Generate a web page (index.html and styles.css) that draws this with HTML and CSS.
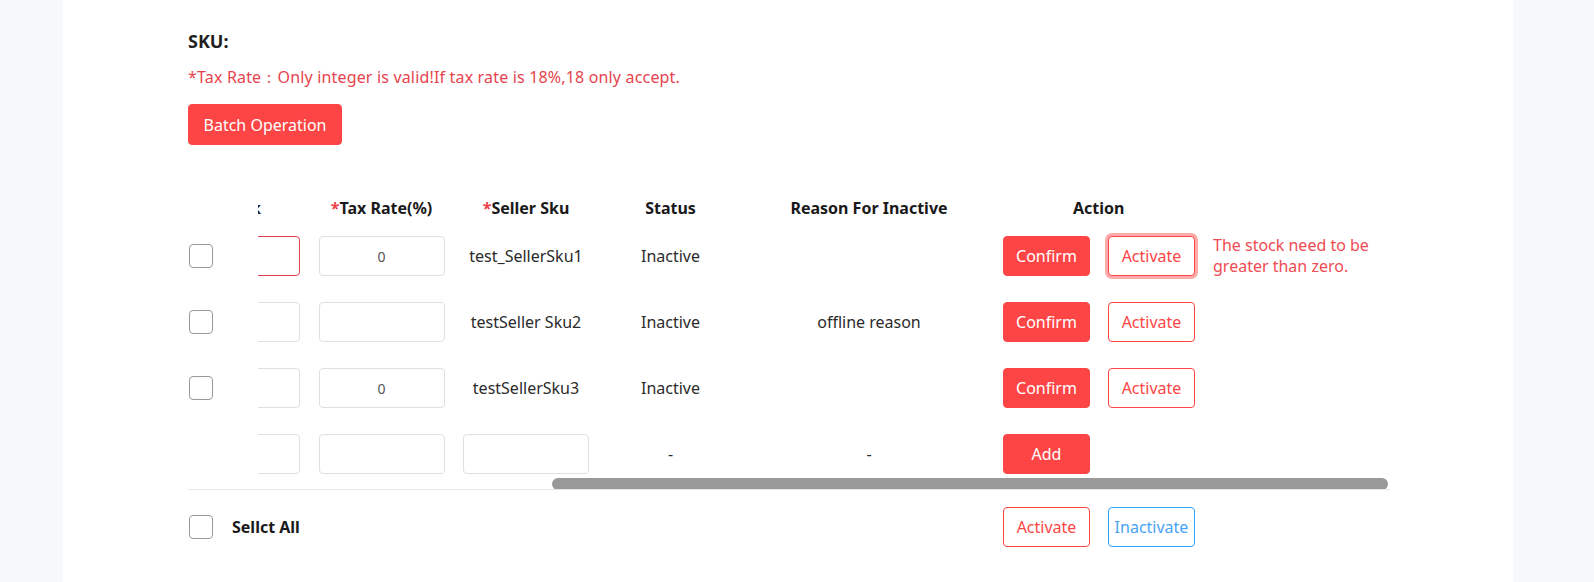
FILE: index.html
```html
<!DOCTYPE html>
<html lang="en">
<head>
<meta charset="utf-8">
<title>SKU</title>
<link rel="stylesheet" href="styles.css">
</head>
<body>
<div class="page">
  <section class="card">
    <h2 class="title">SKU:</h2>
    <p class="note">*Tax Rate：Only integer is valid!If tax rate is 18%,18 only accept.</p>
    <button class="btn btn-solid btn-batch">Batch Operation</button>

    <div class="table">
      <div class="fixed-col">
        <div class="head-cell"></div>
        <div class="check-cell"><span class="checkbox"></span></div>
        <div class="check-cell"><span class="checkbox"></span></div>
        <div class="check-cell"><span class="checkbox"></span></div>
        <div class="check-cell"></div>
      </div>
      <div class="viewport">
        <div class="grid">
          <div class="th th-stock">Stock</div>
          <div class="th"><span class="req">*</span>Tax Rate(%)</div>
          <div class="th"><span class="req">*</span>Seller Sku</div>
          <div class="th">Status</div>
          <div class="th">Reason For Inactive</div>
          <div class="th th-action">Action</div>

          <div class="td"><span class="input input-error"></span></div>
          <div class="td"><span class="input">0</span></div>
          <div class="td">test_SellerSku1</div>
          <div class="td">Inactive</div>
          <div class="td"></div>
          <div class="td td-action">
            <button class="btn btn-solid btn-row">Confirm</button>
            <button class="btn btn-outline btn-row btn-focus">Activate</button>
            <span class="error-msg">The stock need to be<br>greater than zero.</span>
          </div>

          <div class="td"><span class="input"></span></div>
          <div class="td"><span class="input"></span></div>
          <div class="td">testSeller Sku2</div>
          <div class="td">Inactive</div>
          <div class="td">offline reason</div>
          <div class="td td-action">
            <button class="btn btn-solid btn-row">Confirm</button>
            <button class="btn btn-outline btn-row">Activate</button>
          </div>

          <div class="td"><span class="input"></span></div>
          <div class="td"><span class="input">0</span></div>
          <div class="td">testSellerSku3</div>
          <div class="td">Inactive</div>
          <div class="td"></div>
          <div class="td td-action">
            <button class="btn btn-solid btn-row">Confirm</button>
            <button class="btn btn-outline btn-row">Activate</button>
          </div>

          <div class="td"><span class="input"></span></div>
          <div class="td"><span class="input"></span></div>
          <div class="td"><span class="input"></span></div>
          <div class="td">-</div>
          <div class="td">-</div>
          <div class="td td-action">
            <button class="btn btn-solid btn-row">Add</button>
          </div>
        </div>
        <div class="scroll-thumb"></div>
      </div>
    </div>

    <div class="footer">
      <div class="select-all">
        <span class="checkbox"></span>
        <span class="select-label">Sellct All</span>
      </div>
      <div class="footer-actions">
        <button class="btn btn-outline btn-row">Activate</button>
        <button class="btn btn-outline-blue btn-row">Inactivate</button>
      </div>
    </div>
  </section>
</div>
</body>
</html>
```

FILE: styles.css
```css
* { box-sizing: border-box; }

html, body {
  margin: 0;
  padding: 0;
}

body {
  background: #f7f8fa;
  font-family: "Noto Sans", "Open Sans", Arial, sans-serif;
  color: #333;
  font-size: 16px;
}

.page {
  padding-left: 63px;
}

.card {
  width: 1450px;
  min-height: 582px;
  background: #fff;
  padding: 28px 0 0 125px;
}

.title {
  margin: 0;
  font-size: 18px;
  line-height: 26px;
  font-weight: 700;
  color: #1f1f1f;
}

.note {
  margin: 12px 0 0;
  font-size: 16px;
  line-height: 22px;
  letter-spacing: 0.17px;
  color: #e6444e;
}

.btn {
  font-family: inherit;
  font-size: 16px;
  height: 40px;
  border-radius: 4px;
  padding: 0;
  cursor: pointer;
  line-height: 38px;
}

.btn-solid {
  background: #fd4545;
  border: 1px solid #fd4545;
  color: #fff;
}

.btn-outline {
  background: #fff;
  border: 1px solid #fd4545;
  color: #fd4545;
}

.btn-outline-blue {
  background: #fff;
  border: 1px solid #2fa4ff;
  color: #49a3f6;
}

.btn-batch {
  margin-top: 16px;
  width: 154px;
  height: 41px;
  display: block;
}

.btn-row {
  width: 87px;
}

.btn-focus {
  box-shadow: 0 0 0 3px #fcaaaa;
}

/* table */
.table {
  margin-top: 48px;
  width: 1202px;
  display: flex;
  border-bottom: 1px solid #e6e6e6;
}

.fixed-col {
  width: 70px;
  flex: none;
  background: #fff;
  padding-bottom: 2px;
}

.head-cell {
  height: 30px;
}

.check-cell {
  height: 66px;
  display: flex;
  align-items: center;
  padding-left: 1px;
}

.checkbox {
  display: inline-block;
  width: 24px;
  height: 24px;
  border: 1px solid #9a9a9a;
  border-radius: 4px;
  background: #fff;
  flex: none;
}

.viewport {
  position: relative;
  flex: 1;
  overflow: hidden;
  padding-bottom: 2px;
}

.grid {
  margin-left: -94px;
  display: grid;
  grid-template-columns: 145px 145px 144px 145px 252px 209px 200px;
  grid-auto-rows: 66px;
  grid-template-rows: 30px;
  width: 1340px;
}

.th {
  font-weight: 700;
  color: #1a1a1a;
  text-align: center;
  line-height: 30px;
  white-space: nowrap;
}

.th-stock {
  padding-left: 5px;
}

.th-action {
  grid-column: 6 / 8;
  text-align: left;
  padding-left: 78px;
}

.req {
  color: #f03e46;
}

.td {
  display: flex;
  align-items: center;
  justify-content: center;
  color: #2b2b2b;
  white-space: nowrap;
}

.td-action {
  justify-content: flex-start;
  padding-left: 8px;
  gap: 18px;
  grid-column: 6 / 8;
}

.input {
  width: 126px;
  height: 40px;
  border: 1px solid #dcdfe6;
  border-radius: 4px;
  display: flex;
  align-items: center;
  justify-content: center;
  font-size: 14px;
  color: #555;
  background: #fff;
}

.input-error {
  border-color: #e0414b;
}

.error-msg {
  color: #ef4b52;
  font-size: 16px;
  line-height: 21px;
  white-space: nowrap;
}

.scroll-thumb {
  position: absolute;
  left: 294px;
  bottom: -1px;
  width: 836px;
  height: 12px;
  border-radius: 6px;
  background: #999;
}

/* footer */
.footer {
  margin-top: 17px;
  display: flex;
  align-items: center;
  height: 40px;
}

.select-all {
  width: 815px;
  display: flex;
  align-items: center;
  padding-left: 1px;
  gap: 19px;
}

.select-label {
  font-weight: 700;
  color: #1a1a1a;
}

.footer-actions {
  display: flex;
  gap: 18px;
}
```
